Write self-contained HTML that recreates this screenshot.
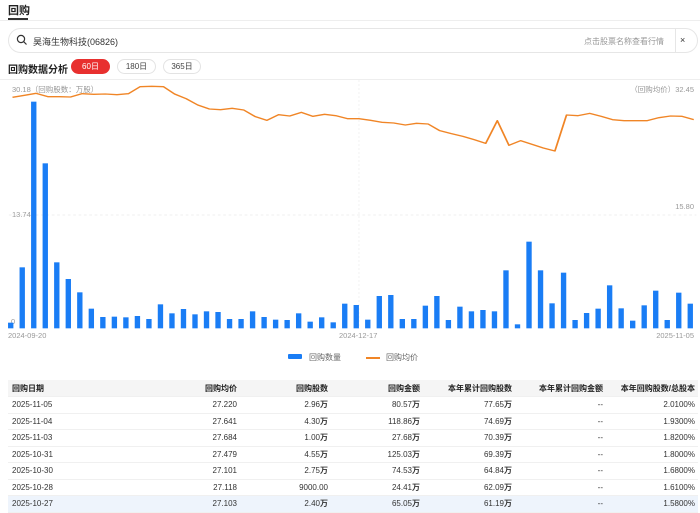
<!DOCTYPE html>
<html><head><meta charset="utf-8"><style>
*{margin:0;padding:0;box-sizing:border-box}
body{width:700px;height:512px;overflow:hidden;background:#fff;font-family:"Liberation Sans","Noto Sans CJK SC",sans-serif;color:#333;position:relative}
.a{position:absolute;white-space:nowrap}
table{position:absolute;left:8px;top:380px;width:690px;border-collapse:collapse;font-size:8px;color:#333;table-layout:fixed}
td,th{height:16.5px;padding:0 3px 0 4px;text-align:right;border-bottom:1px solid #f0f0f0;white-space:nowrap}
th{background:#f5f5f5;font-weight:bold;color:#222}
td:first-child,th:first-child{text-align:left}
tr.hl td{background:#eef4fc}
td b{font-weight:bold}
</style></head><body>
<div class="a" style="left:8px;top:2px;font-size:11px;font-weight:bold;color:#222">回购</div>
<div class="a" style="left:8px;top:18px;width:20px;height:2px;background:#333"></div>
<div class="a" style="left:0;top:20px;width:700px;height:1px;background:#eee"></div>
<div class="a" style="left:8px;top:28px;width:690px;height:25px;border:1px solid #e6e6e6;border-radius:13px"></div>
<svg class="a" style="left:16px;top:34px" width="12" height="12" viewBox="0 0 12 12"><circle cx="5" cy="5" r="3.6" fill="none" stroke="#333" stroke-width="1.2"/><line x1="7.6" y1="7.6" x2="10.5" y2="10.5" stroke="#333" stroke-width="1.2"/></svg>
<div class="a" style="left:33px;top:35px;font-size:9px;color:#333">昊海生物科技(06826)</div>
<div class="a" style="left:584px;top:36px;font-size:8px;color:#999">点击股票名称查看行情</div>
<div class="a" style="left:675px;top:29px;width:1px;height:23px;background:#e6e6e6"></div>
<div class="a" style="left:680px;top:35px;font-size:9px;color:#333">×</div>
<div class="a" style="left:8px;top:61px;font-size:10px;font-weight:bold;color:#222">回购数据分析</div>
<div class="a" style="left:71px;top:59px;width:39px;height:15px;border-radius:8px;background:#e8302f;color:#fff;font-size:8px;text-align:center;line-height:15px">60日</div>
<div class="a" style="left:117px;top:59px;width:39px;height:15px;border-radius:8px;border:1px solid #e3e3e3;color:#444;font-size:8px;text-align:center;line-height:13px">180日</div>
<div class="a" style="left:163px;top:59px;width:38px;height:15px;border-radius:8px;border:1px solid #e3e3e3;color:#444;font-size:8px;text-align:center;line-height:13px">365日</div>
<div class="a" style="left:0;top:79px;width:700px;height:1px;background:#eee"></div>
<div class="a" style="left:12px;top:84px;font-size:7.5px;color:#999">30.18（回购股数：万股）</div>
<div class="a" style="right:6px;top:84px;font-size:7.5px;color:#999">（回购均价）32.45</div>
<div class="a" style="left:12px;top:210px;font-size:7.5px;color:#999">13.74</div>
<div class="a" style="right:6px;top:202px;font-size:7.5px;color:#999">15.80</div>
<div class="a" style="left:11px;top:317px;font-size:7.5px;color:#999">0</div>
<div class="a" style="left:8px;top:331px;font-size:7.5px;color:#999">2024-09-20</div>
<div class="a" style="left:339px;top:331px;font-size:7.5px;color:#999">2024-12-17</div>
<div class="a" style="right:6px;top:331px;font-size:7.5px;color:#999">2025-11-05</div>
<svg class="a" style="left:0;top:80px" width="700" height="290" viewBox="0 0 1568 870" preserveAspectRatio="none">
<line x1="20" y1="405" x2="1560" y2="405" stroke="#eaeaea" stroke-width="2" stroke-dasharray="6,6"/>
<line x1="804" y1="0" x2="804" y2="745" stroke="#f0f0f0" stroke-width="2" stroke-dasharray="6,6"/>
<g fill="#1a7df5" id="bars"></g>
<polyline fill="none" stroke="#f08526" stroke-width="4" stroke-linejoin="round" points="28,52 55,46 81,40 107,50 133,50 158,51 184,41 210,43 236,42 262,44 288,41 314,20 340,19 366,20 391,42 417,56 443,75 469,87 494,89 520,85 546,90 572,110 598,121 624,104 649,108 675,97 701,109 727,103 752,107 778,116 804,116 830,121 856,127 882,129 908,135 933,130 959,132 985,152 1011,161 1037,169 1062,179 1088,190 1114,122 1140,196 1166,182 1192,193 1217,204 1243,213 1269,105 1295,107 1321,100 1347,109 1372,119 1398,122 1424,122 1450,122 1476,113 1502,108 1528,109 1554,119"/>
</svg>
<svg class="a" style="left:288px;top:354px" width="16" height="6"><rect width="14" height="5" rx="1" fill="#1a7df5"/></svg>
<div class="a" style="left:309px;top:352px;font-size:8px;color:#666">回购数量</div>
<div class="a" style="left:366px;top:357px;width:14px;height:2px;background:#f08526"></div>
<div class="a" style="left:386px;top:352px;font-size:8px;color:#666">回购均价</div>
<table>
<colgroup><col style="width:100px"><col style="width:132px"><col style="width:91px"><col style="width:92px"><col style="width:92px"><col style="width:91px"><col style="width:92px"></colgroup>
<tr><th>回购日期</th><th>回购均价</th><th>回购股数</th><th>回购金额</th><th>本年累计回购股数</th><th>本年累计回购金额</th><th>本年回购股数/总股本</th></tr>
<tr><td>2025-11-05</td><td>27.220</td><td>2.96<b>万</b></td><td>80.57<b>万</b></td><td>77.65<b>万</b></td><td>--</td><td>2.0100%</td></tr>
<tr><td>2025-11-04</td><td>27.641</td><td>4.30<b>万</b></td><td>118.86<b>万</b></td><td>74.69<b>万</b></td><td>--</td><td>1.9300%</td></tr>
<tr><td>2025-11-03</td><td>27.684</td><td>1.00<b>万</b></td><td>27.68<b>万</b></td><td>70.39<b>万</b></td><td>--</td><td>1.8200%</td></tr>
<tr><td>2025-10-31</td><td>27.479</td><td>4.55<b>万</b></td><td>125.03<b>万</b></td><td>69.39<b>万</b></td><td>--</td><td>1.8000%</td></tr>
<tr><td>2025-10-30</td><td>27.101</td><td>2.75<b>万</b></td><td>74.53<b>万</b></td><td>64.84<b>万</b></td><td>--</td><td>1.6800%</td></tr>
<tr><td>2025-10-28</td><td>27.118</td><td>9000.00</td><td>24.41<b>万</b></td><td>62.09<b>万</b></td><td>--</td><td>1.6100%</td></tr>
<tr class="hl"><td>2025-10-27</td><td>27.103</td><td>2.40<b>万</b></td><td>65.05<b>万</b></td><td>61.19<b>万</b></td><td>--</td><td>1.5800%</td></tr>
</table>
<script>
var t=[728,562,65,250,547,597,637,686,711,710,712,708,717,673,700,687,703,694,696,717,717,694,711,719,720,700,725,712,727,671,675,719,648,645,717,717,677,648,720,680,694,690,694,571,733,485,571,670,578,720,699,686,616,685,722,676,632,720,638,671];
var g=document.getElementById('bars'),s='';
for(var i=0;i<t.length;i++){var x=24+i*25.8;s+='<rect x="'+(x-6)+'" y="'+t[i]+'" width="12" height="'+(745-t[i])+'"/>';}
g.innerHTML=s;
</script>
</body></html>
